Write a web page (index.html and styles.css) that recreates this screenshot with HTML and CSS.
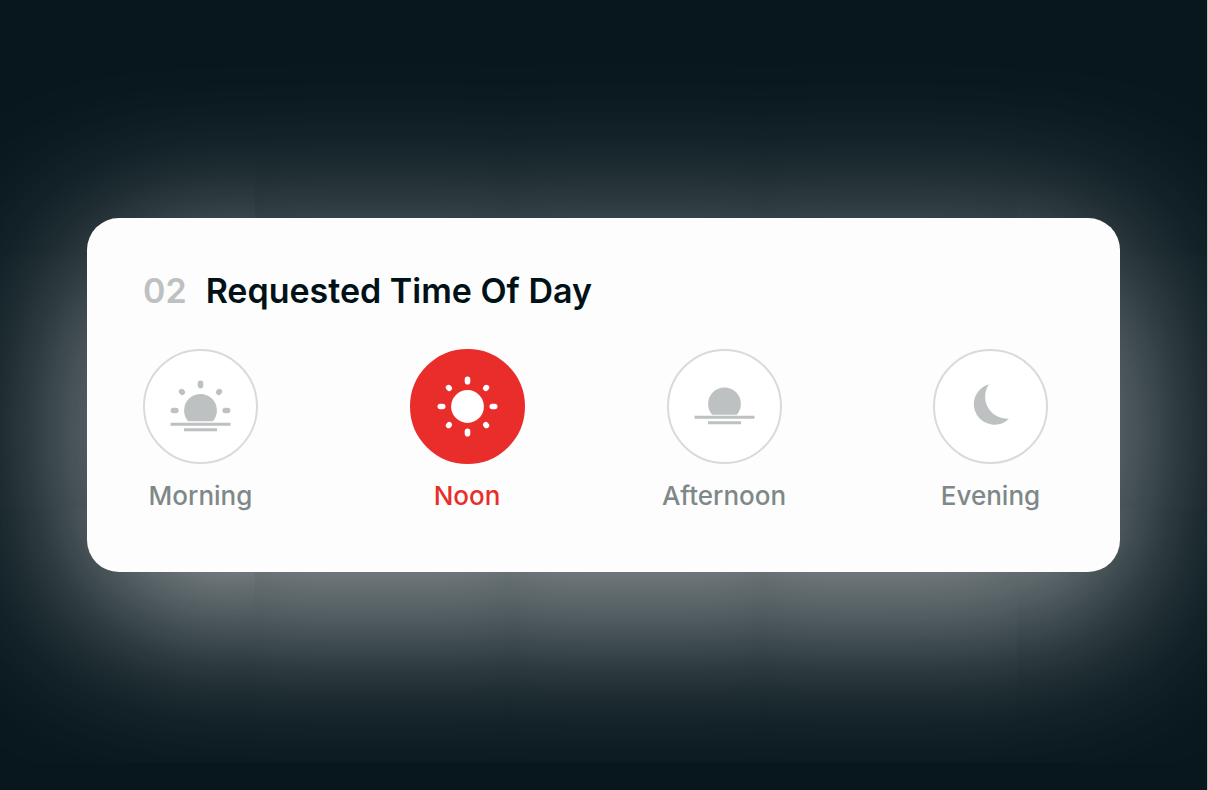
FILE: index.html
```html
<!DOCTYPE html>
<html lang="en">
  <head>
    <meta charset="UTF-8" />
    <meta name="viewport" content="width=device-width, initial-scale=1.0" />
    <title>Requested Time Of Day</title>
    <link rel="stylesheet" href="styles.css">
  </head>
  <body>
    <main class="wrapper">
      <form class="card">
        <h1 id="title"><span class="step">02</span>Requested Time Of Day</h1>

        <div class="options" role="radiogroup" aria-labelledby="title">
          <div class="pair">
            <label class="option">
              <input type="radio" name="time" value="morning" />
              <svg class="icon" viewBox="0 0 115 115" aria-hidden="true">
                <path d="M45.2 72.3a16.4 16.4 0 1 1 24.6 0z" />
                <path d="M27.5 73.8h60v3h-60zM41 79.2h33v3H41z" />
                <g class="rays">
                  <path d="M57.5 34.2v2.4M30.4 61.5h2.4M82.2 61.5h2.4" />
                  <path d="M38.6 42.6l.6.6M76.4 42.6l-.6.6" />
                </g>
              </svg>
              <span class="name">Morning</span>
            </label>

            <label class="option">
              <input type="radio" name="time" value="noon" checked />
              <svg class="icon" viewBox="0 0 115 115" aria-hidden="true">
                <circle cx="57.5" cy="57.5" r="16.4" />
                <g class="rays">
                  <path d="M57.5 30.3v2.4M57.5 82.3v2.4M30.3 57.5h2.4M82.3 57.5h2.4" />
                  <path d="M38.6 38.6l.6.6M76.4 38.6l-.6.6M38.6 76.4l.6-.6M76.4 76.4l-.6-.6" />
                </g>
              </svg>
              <span class="name">Noon</span>
            </label>
          </div>

          <div class="pair">
            <label class="option">
              <input type="radio" name="time" value="afternoon" />
              <svg class="icon" viewBox="0 0 115 115" aria-hidden="true">
                <path d="M45.2 65.7a16.4 16.4 0 1 1 24.6 0z" />
                <path d="M27.5 66.8h60v3h-60zM41 72.2h33v3H41z" />
              </svg>
              <span class="name">Afternoon</span>
            </label>

            <label class="option">
              <input type="radio" name="time" value="evening" />
              <svg class="icon" viewBox="0 0 115 115" aria-hidden="true">
                <path d="M56 35.3a22 22 0 0 0 20 34.4A20.6 20.6 0 1 1 56 35.3z" />
              </svg>
              <span class="name">Evening</span>
            </label>
          </div>
        </div>
      </form>
    </main>
  </body>
</html>
```
FILE: styles.css
```css
* {
  padding: 0;
  margin: 0;
  box-sizing: border-box;
}

body {
  font-family: Inter, "Liberation Sans", sans-serif;
  background: #07171d;
}

.wrapper {
  min-height: 100vh;
  padding: 0 87px;
  display: flex;
  align-items: center;
  overflow: hidden;
  border-right: 1px solid #b9c0c1;
}

.card {
  width: 100%;
  padding: 53px 72px 60px 56px;
  background: #fdfdfd;
  border-radius: 32px;
  box-shadow: 0 36px 170px rgba(255, 255, 255, 0.68);
}

h1 {
  margin-bottom: 38px;
  color: #001117;
  font-size: 34px;
  font-weight: 600;
  line-height: 40px;
}

.step {
  margin-right: 19px;
  color: #bdc1c1;
}

.options {
  display: flex;
  gap: 142px;
}

.pair {
  flex: 1;
  display: flex;
  justify-content: space-between;
}

.option {
  width: 115px;
  display: grid;
  grid-template-columns: 115px;
  justify-items: center;
  row-gap: 16px;
  color: #7f8889;
  cursor: pointer;
}

input,
.icon {
  grid-area: 1 / 1;
  width: 115px;
  height: 115px;
}

input {
  appearance: none;
  background: #fff;
  border: 2px solid #d9dada;
  border-radius: 50%;
  cursor: pointer;
}

input:checked {
  background: #e92d2b;
  border-color: #e92d2b;
}

.icon {
  fill: #bdc1c1;
  pointer-events: none;
}

.rays {
  stroke: #bdc1c1;
  stroke-width: 5.6;
  stroke-linecap: round;
}

input:checked ~ .icon {
  fill: #fff;
}

input:checked ~ .icon .rays {
  stroke: #fff;
}

.name {
  font-size: 26px;
  font-weight: 500;
  line-height: 32px;
  white-space: nowrap;
}

input:checked ~ .name {
  color: #e92d2b;
}
```
